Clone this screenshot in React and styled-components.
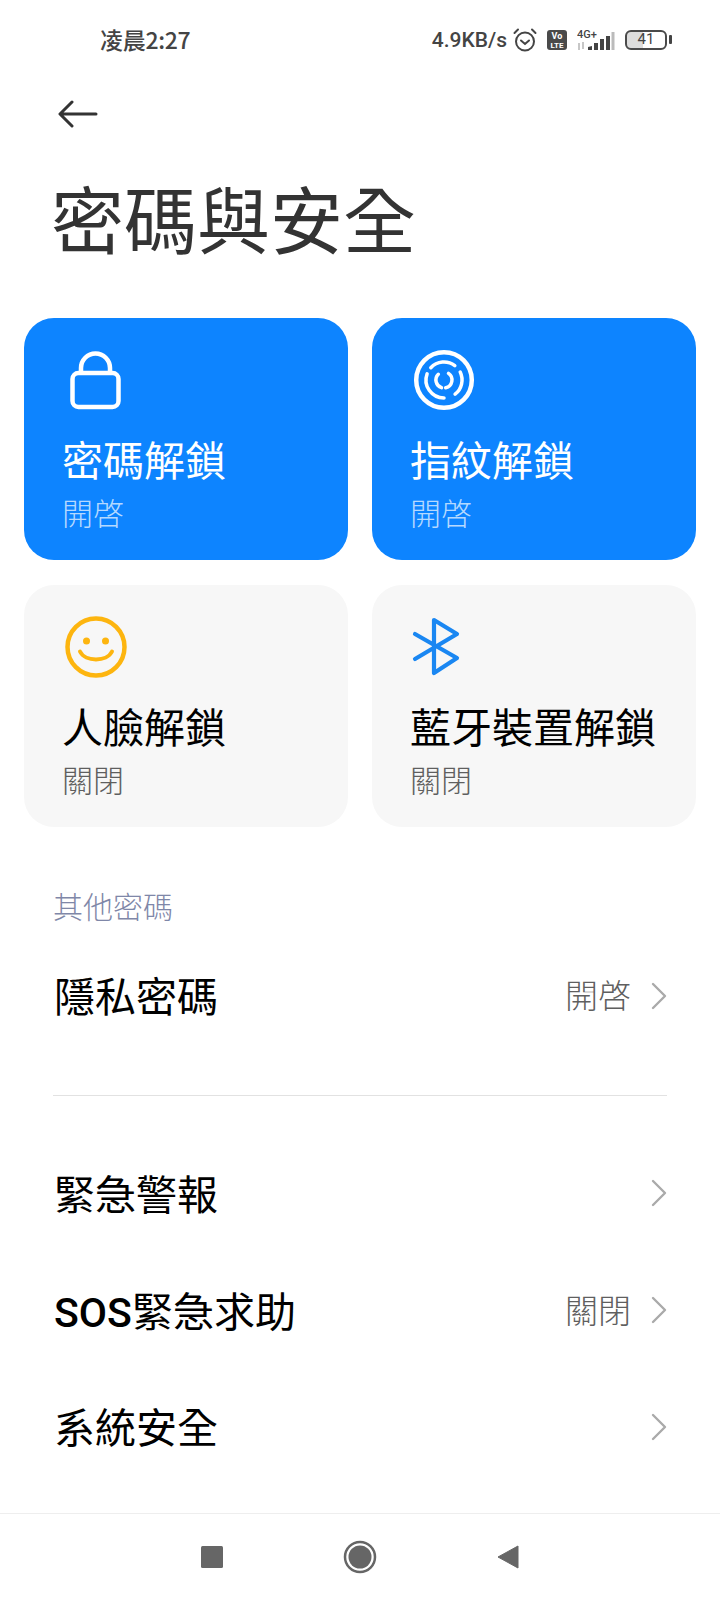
import React from "react";
import styled, { createGlobalStyle } from "styled-components";

const GlobalStyle = createGlobalStyle`
  html, body {
    margin: 0;
    padding: 0;
    background: #fff;
  }
  * {
    box-sizing: border-box;
  }
`;

const Page = styled.div`
  width: 720px;
  height: 1600px;
  background: #fff;
  display: flex;
  flex-direction: column;
  font-family: "Noto Sans CJK TC", "Noto Sans", sans-serif;
  color: #000;
  overflow: hidden;
`;

const StatusBar = styled.div`
  height: 80px;
  padding: 0 53px 0 100px;
  display: flex;
  align-items: center;
  color: #444;
  flex-shrink: 0;
`;

const Clock = styled.span`
  font-size: 23px;
  font-weight: 500;
  letter-spacing: -0.3px;
  margin-top: -3px;
  flex: 1;
`;

const Speed = styled.span`
  font-family: Roboto, sans-serif;
  font-size: 21px;
  font-weight: 500;
  margin-right: 6px;
`;

const StatusIcons = styled.div`
  display: flex;
  align-items: center;
  gap: 10px;
`;

const BackRow = styled.div`
  height: 64px;
  padding: 4px 0 0 58px;
  display: flex;
  align-items: center;
  flex-shrink: 0;
`;

const Title = styled.h1`
  margin: 0;
  padding: 22px 0 0 51px;
  height: 174px;
  font-size: 73px;
  line-height: 100px;
  font-weight: 400;
  color: #333;
  flex-shrink: 0;
`;

const CardGrid = styled.div`
  display: grid;
  grid-template-columns: 324px 324px;
  grid-auto-rows: 242px;
  gap: 25px 24px;
  padding: 0 24px;
  flex-shrink: 0;
`;

const Card = styled.div`
  border-radius: 30px;
  padding: 31px 38px 0;
  background: ${(p) => (p.$on ? "#0d84ff" : "#f7f7f7")};
  display: flex;
  flex-direction: column;
`;

const CardIcon = styled.div`
  height: 62px;
  margin: 0 0 17px ${(p) => p.$shift}px;
  display: flex;
  align-items: center;
`;

const CardName = styled.div`
  font-size: 41px;
  line-height: 60px;
  white-space: nowrap;
  color: ${(p) => (p.$on ? "#fff" : "#000")};
`;

const CardState = styled.div`
  font-size: 31px;
  line-height: 48px;
  font-weight: 300;
  color: ${(p) => (p.$on ? "#b5d9ff" : "#5f5f5f")};
`;

const SectionLabel = styled.div`
  margin-top: 55px;
  padding-left: 53px;
  font-size: 30px;
  line-height: 46px;
  font-weight: 300;
  color: #7f87a8;
  flex-shrink: 0;
`;

const Row = styled.div`
  height: ${(p) => p.$h}px;
  padding: 0 53px 0 54px;
  display: flex;
  align-items: center;
  flex-shrink: 0;
`;

const RowName = styled.div`
  flex: 1;
  font-size: 41px;
  font-weight: 400;
  color: #000;
`;

const RowValue = styled.div`
  font-size: 33px;
  font-weight: 300;
  color: #5f5f5f;
  margin-right: 20px;
`;

const ChevronMark = styled.svg`
  margin-top: 3px;
`;

const Divider = styled.div`
  height: 1px;
  margin: 35px 53px 37px;
  background: #e2e2e2;
  flex-shrink: 0;
`;

const NavBar = styled.div`
  margin-top: auto;
  height: 87px;
  border-top: 1px solid #eee;
  display: flex;
  align-items: center;
  justify-content: center;
  gap: 120px;
  flex-shrink: 0;
`;

const Latin = styled.span`
  font-family: Roboto, sans-serif;
  font-weight: 500;
`;

const Battery = styled.div`
  position: relative;
  width: 42px;
  height: 20px;
  border: 2.500px solid #4a4a4a;
  border-radius: 6px;
  font-family: Roboto, sans-serif;
  font-size: 15px;
  line-height: 15px;
  text-align: center;
  color: #444;
  background: linear-gradient(90deg, #ddd 41%, transparent 41%);

  &::after {
    content: "";
    position: absolute;
    right: -7px;
    top: 3px;
    width: 3px;
    height: 9px;
    background: #444;
    border-radius: 1px;
  }
`;

function LockIcon() {
  return (
    <svg width="62" height="62" viewBox="0 0 62 62" fill="none" stroke="#fff" strokeWidth="4.5">
      <rect x="12.5" y="24" width="46" height="34" rx="6" />
      <path d="M21 26v-7a14.500 14.500 0 0 1 29 0v7" />
    </svg>
  );
}

function FingerprintIcon() {
  return (
    <svg width="62" height="62" viewBox="0 0 62 62" fill="none" stroke="#fff" strokeLinecap="round">
      <circle cx="31" cy="31" r="27.800" strokeWidth="4.500" />
      <g strokeWidth="3.500">
        <path d="M17.800 18.700A18 18 0 0 1 41.800 16.600" />
        <path d="M47.200 23.100A18 18 0 0 1 42.100 45.200" />
        <path d="M14.100 24.800A18 18 0 0 0 31 49" />
        <path d="M25.300 25.300A8 8 0 0 0 28.500 38.600" />
        <path d="M35.500 24.400A8 8 0 0 1 32.700 38.800" />
      </g>
    </svg>
  );
}

function SmileIcon() {
  return (
    <svg width="62" height="62" viewBox="0 0 62 62" fill="none" stroke="#fdb50f">
      <circle cx="31" cy="31" r="28.500" strokeWidth="4.500" />
      <circle cx="21.500" cy="25" r="3.500" fill="#fdb50f" stroke="none" />
      <circle cx="40.500" cy="25" r="3.500" fill="#fdb50f" stroke="none" />
      <path d="M15 35.500C20 46 42 46 47 35.500" strokeWidth="4" strokeLinecap="round" />
    </svg>
  );
}

function BluetoothIcon() {
  return (
    <svg width="48" height="60" viewBox="0 0 48 60" fill="none" stroke="#1a87f2" strokeWidth="4.200" strokeLinecap="round" strokeLinejoin="round">
      <path d="M3 17L45 41L22 56V3L45 17L3 42" />
    </svg>
  );
}

function Chevron() {
  return (
    <ChevronMark width="16" height="28" viewBox="0 0 16 28" fill="none" stroke="#aaa" strokeWidth="2.400" strokeLinecap="round" strokeLinejoin="round">
      <path d="M2 2L14 14L2 26" />
    </ChevronMark>
  );
}

function BackArrow() {
  return (
    <svg width="40" height="30" viewBox="0 0 40 30" fill="none" stroke="#333" strokeWidth="3" strokeLinecap="round" strokeLinejoin="round">
      <path d="M38 15H3M14 3L2 15L14 27" />
    </svg>
  );
}

function AlarmIcon() {
  return (
    <svg width="24" height="24" viewBox="0 0 24 24" fill="none" stroke="#444" strokeWidth="2">
      <circle cx="12" cy="13.500" r="9" />
      <path d="M8 12.500L12 16L16 12.500" strokeLinecap="round" />
      <path d="M1.500 5L5 1.500M22.500 5L19 1.500" strokeLinecap="round" />
    </svg>
  );
}

function VolteIcon() {
  return (
    <svg width="20" height="20" viewBox="0 0 20 20">
      <rect width="20" height="20" rx="3" fill="#4a4a4a" />
      <text x="10" y="9" fontSize="9" fontWeight="700" fill="#fff" textAnchor="middle" fontFamily="Roboto, sans-serif">Vo</text>
      <text x="10" y="17.500" fontSize="8" fontWeight="700" fill="#fff" textAnchor="middle" fontFamily="Roboto, sans-serif">LTE</text>
    </svg>
  );
}

function SignalIcon() {
  return (
    <svg width="38" height="22" viewBox="0 0 38 22">
      <text x="0" y="9" fontSize="11" fontWeight="500" fill="#444" fontFamily="Roboto, sans-serif">4G+</text>
      <path d="M2 14v7M6 13v7" stroke="#aaa" strokeWidth="1.300" />
      <path d="M11 21v-3l4 -1v4zM17 21v-7h4v7zM23 21v-11h4v11zM29 21v-14h4v14z" fill="#444" />
      <path d="M34.500 21V3h3v18z" fill="#bbb" />
    </svg>
  );
}

function NavSquare() {
  return (
    <svg width="22" height="22" viewBox="0 0 22 22">
      <rect width="22" height="22" rx="1.500" fill="#666" />
    </svg>
  );
}

function NavCircle() {
  return (
    <svg width="34" height="34" viewBox="0 0 34 34" fill="none">
      <circle cx="17" cy="17" r="15" stroke="#666" strokeWidth="2.500" />
      <circle cx="17" cy="17" r="11.500" fill="#666" />
    </svg>
  );
}

function NavTriangle() {
  return (
    <svg width="22" height="24" viewBox="0 0 22 24">
      <path d="M21 1V23L1 12Z" fill="#666" stroke="#666" strokeWidth="1" strokeLinejoin="round" />
    </svg>
  );
}

const cards = [
  { name: "密碼解鎖", state: "開啓", on: true, icon: <LockIcon />, shift: -2 },
  { name: "指紋解鎖", state: "開啓", on: true, icon: <FingerprintIcon />, shift: 3 },
  { name: "人臉解鎖", state: "關閉", on: false, icon: <SmileIcon />, shift: 3 },
  { name: "藍牙裝置解鎖", state: "關閉", on: false, icon: <BluetoothIcon />, shift: 2 },
];

export default function App() {
  return (
    <Page>
      <GlobalStyle />
      <StatusBar>
        <Clock>凌晨2:27</Clock>
        <Speed>4.9KB/s</Speed>
        <StatusIcons>
          <AlarmIcon />
          <VolteIcon />
          <SignalIcon />
          <Battery>41</Battery>
        </StatusIcons>
      </StatusBar>
      <BackRow>
        <BackArrow />
      </BackRow>
      <Title>密碼與安全</Title>
      <CardGrid>
        {cards.map((card) => (
          <Card key={card.name} $on={card.on}>
            <CardIcon $shift={card.shift}>{card.icon}</CardIcon>
            <CardName $on={card.on}>{card.name}</CardName>
            <CardState $on={card.on}>{card.state}</CardState>
          </Card>
        ))}
      </CardGrid>
      <SectionLabel>其他密碼</SectionLabel>
      <Row $h={132}>
        <RowName>隱私密碼</RowName>
        <RowValue>開啓</RowValue>
        <Chevron />
      </Row>
      <Divider />
      <Row $h={117}>
        <RowName>緊急警報</RowName>
        <Chevron />
      </Row>
      <Row $h={117}>
        <RowName><Latin>SOS</Latin>緊急求助</RowName>
        <RowValue>關閉</RowValue>
        <Chevron />
      </Row>
      <Row $h={116}>
        <RowName>系統安全</RowName>
        <Chevron />
      </Row>
      <NavBar>
        <NavSquare />
        <NavCircle />
        <NavTriangle />
      </NavBar>
    </Page>
  );
}
